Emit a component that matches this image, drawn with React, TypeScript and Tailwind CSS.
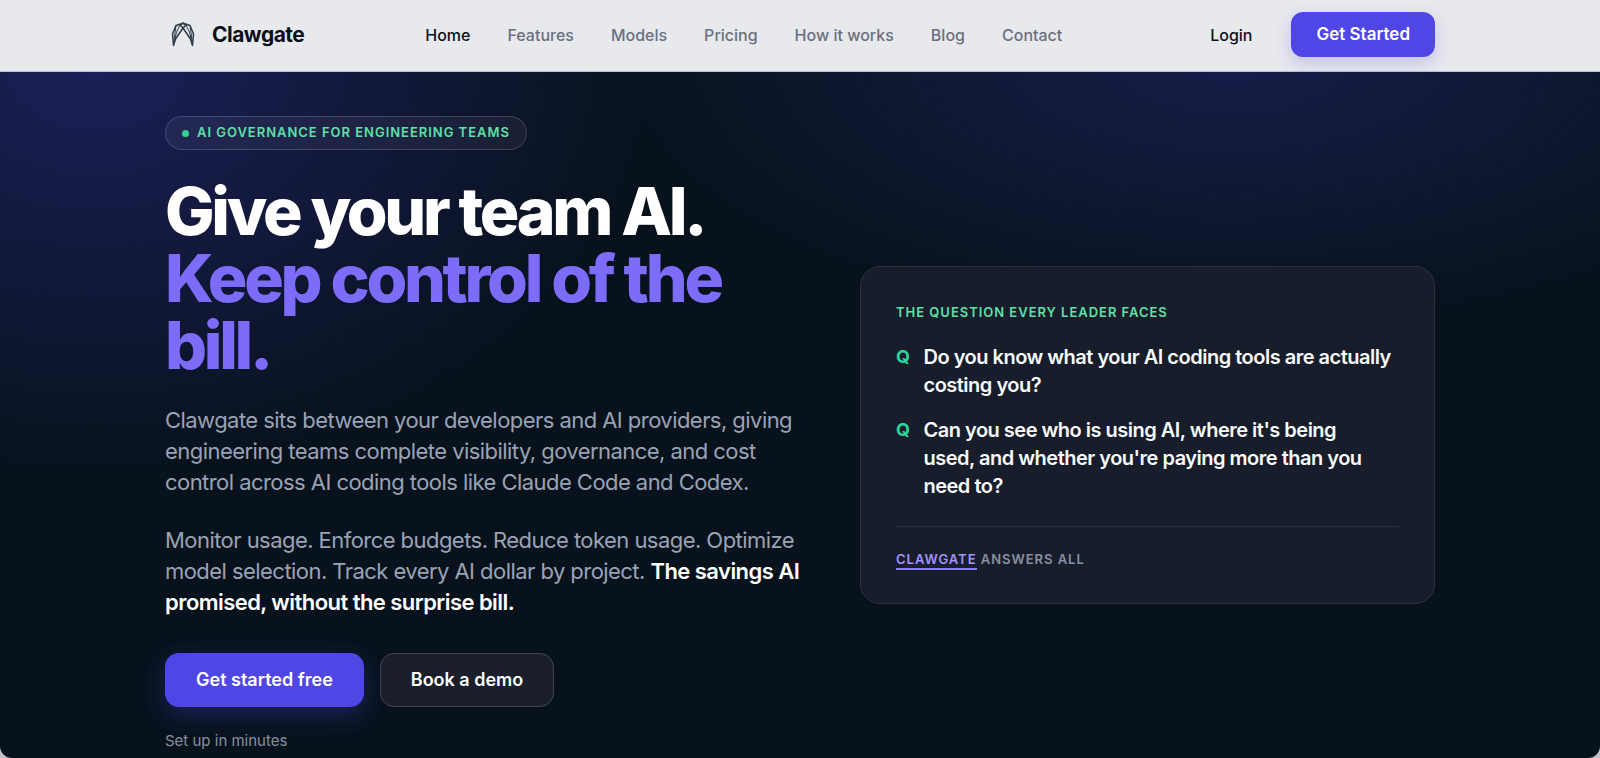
import React from "react";

const links = ["Home", "Features", "Models", "Pricing", "How it works", "Blog", "Contact"];

const questions = [
  "Do you know what your AI coding tools are actually\ncosting you?",
  "Can you see who is using AI, where it's being\nused, and whether you're paying more than you\nneed to?",
];

function Logo() {
  return (
    <svg viewBox="0 0 24 25" className="h-[25px] w-6" fill="none" stroke="#2c3d49" strokeWidth="1.5" strokeLinejoin="round" strokeLinecap="round" aria-hidden="true">
      <path d="M12 1.200 L5 3.500 L1.500 12 L2.500 23.500 L4.500 17 L12 6 L15 3 Z" />
      <path d="M12 1.200 L19 3.500 L22.500 12 L21.500 23.500 L19.500 17 L12 6 L9 3 Z" />
      <path d="M5 3.500 L3.800 12 L2.500 23 M9 3 L5.500 10 L3.200 20 M19 3.500 L20.200 12 L21.500 23 M15 3 L18.500 10 L20.800 20" strokeWidth="1" />
    </svg>
  );
}

function Header() {
  return (
    <header className="border-b border-[#b9c0d2] bg-[#e8e9ed]">
      <div className="mx-auto flex h-[71px] max-w-[1270px] items-center pb-0.5">
        <a href="#" className="flex items-center gap-[17px] pl-1.5 text-[21px] font-bold tracking-tight text-[#0d1118]">
          <Logo />
          Clawgate
        </a>
        <nav aria-label="Main" className="ml-[121px] flex gap-[37px] text-base font-medium text-[#6b7080]">
          {links.map((label, i) => (
            <a key={label} href="#" className={i === 0 ? "text-[#0d1118]" : ""}>
              {label}
            </a>
          ))}
        </nav>
        <div className="ml-auto flex items-center gap-[39px]">
          <a href="#" className="text-base font-medium text-[#0d1118]">Login</a>
          <button type="button" className="h-[45px] rounded-xl bg-[#4f46e5] px-[25px] text-[17px] font-semibold text-white shadow-[0_6px_16px_rgba(79,70,229,0.25)]">
            Get Started
          </button>
        </div>
      </div>
    </header>
  );
}

function QuestionCard() {
  return (
    <section className="rounded-[20px] border border-[#2a323e] bg-[#171d2a] px-[35px] pt-[35px] pb-[34px]">
      <h2 className="text-[13px] leading-5 font-semibold tracking-[0.075em] text-[#5ee0a8] uppercase">
        The question every leader faces
      </h2>
      <ul className="mt-[21px] flex flex-col gap-[17px] text-xl leading-7 font-semibold tracking-tight text-[#f8fafc]">
        {questions.map((q) => (
          <li key={q} className="flex gap-3.5">
            <span className="text-lg leading-7 font-bold text-[#2dd49b]">Q</span>
            <span className="whitespace-pre-line">{q}</span>
          </li>
        ))}
      </ul>
      <p className="mt-[26px] border-t border-[#2a323e] pt-[22px] text-[13px] leading-5 font-semibold tracking-[0.075em] text-[#8790a0] uppercase">
        <a href="#" className="border-b-2 border-[#8b7cf8] pb-px text-[#a393ff]">Clawgate</a> answers all
      </p>
    </section>
  );
}

export default function App() {
  return (
    <div className="min-h-screen bg-[#c3c3c8] font-['Inter',sans-serif]">
      <div className="flex min-h-screen flex-col overflow-hidden rounded-b-xl bg-[#08121d]">
        <Header />
        <main className="grow bg-[radial-gradient(ellipse_560px_410px_at_6%_-1%,rgba(67,56,202,0.34),transparent),radial-gradient(ellipse_620px_270px_at_77%_-2%,rgba(79,70,229,0.22),transparent)]">
          <div className="mx-auto grid max-w-[1270px] grid-cols-[639fr_575fr] items-center gap-14 pt-11 pb-1">
            <div>
              <p className="inline-flex h-[34px] items-center gap-2 rounded-full border border-white/15 bg-white/5 px-4 text-[13px] font-semibold tracking-[0.075em] text-[#5ee0a8] uppercase">
                <span className="size-[7px] rounded-full bg-[#2dd48f]" />
                AI governance for engineering teams
              </p>
              <h1 className="mt-7 text-[66px] leading-[67px] font-extrabold tracking-tighter text-white">
                Give your team AI.
                <span className="block text-[#7c6cf8]">Keep control of the bill.</span>
              </h1>
              <p className="mt-[26px] text-[22px] leading-[31px] tracking-tight text-[#9aa3b5]">
                Clawgate sits between your developers and AI providers, giving engineering teams complete visibility, governance, and cost control across AI coding tools like Claude Code and Codex.
              </p>
              <p className="mt-[27px] text-[22px] leading-[31px] tracking-tight text-[#9aa3b5]">
                Monitor usage. Enforce budgets. Reduce token usage. Optimize model selection. Track every AI dollar by project.{" "}
                <strong className="font-semibold text-white">The savings AI promised, without the surprise bill.</strong>
              </p>
              <div className="mt-[35px] flex gap-4">
                <button type="button" className="h-[54px] rounded-[14px] bg-[#4f46e5] px-[31px] text-lg font-semibold text-white shadow-[0_8px_24px_rgba(79,70,229,0.3)]">
                  Get started free
                </button>
                <button type="button" className="h-[54px] rounded-[14px] border border-[#404651] bg-[#1a1f2b] px-[30px] text-lg font-semibold text-white">
                  Book a demo
                </button>
              </div>
              <p className="mt-[22px] text-[15px] leading-6 text-[#8790a0]">Set up in minutes</p>
            </div>
            <QuestionCard />
          </div>
        </main>
      </div>
    </div>
  );
}
